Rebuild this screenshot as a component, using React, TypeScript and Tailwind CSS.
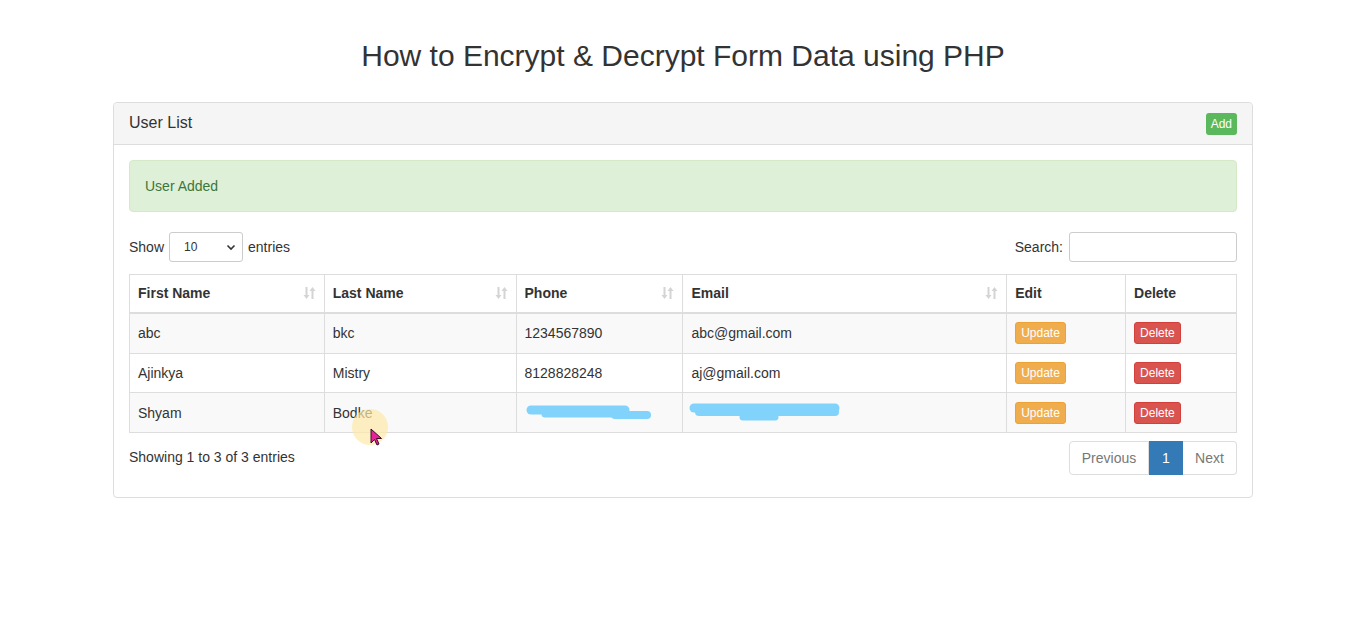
import React from "react";

const SortIcon = () => (
  <svg width="13" height="14" viewBox="0 0 13 14" className="shrink-0">
    <g fill="#d4d4d4">
      <rect x="2.5" y="1" width="2" height="9" />
      <polygon points="0.5,9 6.5,9 3.5,13" />
      <rect x="8.5" y="4" width="2" height="9" />
      <polygon points="6.5,5 12.5,5 9.5,1" />
    </g>
  </svg>
);

const Th = ({ label, sort, w }: { label: string; sort?: boolean; w: string }) => (
  <th className={`${w} h-[38px] border-r border-[#ddd] last:border-r-0 border-b-2 border-b-[#ddd] px-[8px] pt-[8px] pb-[8px] text-left font-bold leading-[20px]`}>
    <div className="flex items-center justify-between">
      <span>{label}</span>
      {sort && <SortIcon />}
    </div>
  </th>
);

const rows = [
  { f: "abc", l: "bkc", p: "1234567890", e: "abc@gmail.com" },
  { f: "Ajinkya", l: "Mistry", p: "8128828248", e: "aj@gmail.com" },
  { f: "Shyam", l: "Bodke", p: "", e: "" },
];

const PhoneScribble = () => (
  <svg width="130" height="20" viewBox="0 0 130 20" className="block">
    <g stroke="#82d3fc" strokeLinecap="round" fill="none">
      <path d="M6 7 L100 7" strokeWidth="9" />
      <path d="M20 11 L98 11" strokeWidth="7" />
      <path d="M90 12 L122 12" strokeWidth="8" />
    </g>
  </svg>
);

const EmailScribble = () => (
  <svg width="160" height="24" viewBox="0 0 160 24" className="block">
    <g stroke="#82d3fc" strokeLinecap="round" fill="none">
      <path d="M7 7 L148 7" strokeWidth="9" />
      <path d="M12 11 L148 11" strokeWidth="8" />
      <path d="M56 16 L88 16" strokeWidth="7" />
    </g>
  </svg>
);

const rowHeights = ["h-[41px]", "h-[39px]", "h-[40px]"];

export default function App() {
  return (
    <div
      className="relative min-h-[628px] bg-white text-[14px] text-[#333]"
      style={{ fontFamily: '"Liberation Sans", Arial, Helvetica, sans-serif' }}
    >
      <div className="mx-auto w-[1170px] pl-[16px] pr-[14px]">
        <h1 className="pt-[39px] pb-[30px] text-center text-[30px] font-normal leading-[33px] text-[#333]">
          How to Encrypt &amp; Decrypt Form Data using PHP
        </h1>

        <div className="rounded-[4px] border border-[#ddd] bg-white">
          <div className="flex items-start justify-between rounded-t-[4px] border-b border-[#ddd] bg-[#f5f5f5] px-[15px] pt-[10px] pb-[9px]">
            <div className="pt-[1px] text-[16px] leading-[18px]">User List</div>
            <button className="h-[22px] rounded-[3px] bg-[#5cb85c] px-[5px] text-[12px] leading-[18px] text-white">
              Add
            </button>
          </div>

          <div className="px-[15px] pt-[15px] pb-[15px]">
            <div className="mb-[20px] flex h-[52px] items-center rounded-[4px] border border-[#d6e9c6] bg-[#dff0d8] px-[15px] text-[#3c763d]">
              User Added
            </div>

            <div className="flex items-center justify-between">
              <div className="flex items-center gap-[5px]">
                <span>Show</span>
                <div className="flex h-[30px] w-[74px] items-center justify-between rounded-[3px] border border-[#ccc] bg-white pl-[14px] pr-[6px] text-[12px]">
                  <span>10</span>
                  <svg width="10" height="10" viewBox="0 0 10 10">
                    <path d="M1.5 3.5 L5 7 L8.5 3.5" stroke="#333" strokeWidth="1.6" fill="none" />
                  </svg>
                </div>
                <span>entries</span>
              </div>
              <div className="flex items-center gap-[6px]">
                <span>Search:</span>
                <div className="h-[30px] w-[168px] rounded-[3px] border border-[#ccc] bg-white" />
              </div>
            </div>

            <table className="mt-[12px] w-full border-collapse border border-[#ddd]">
              <thead>
                <tr>
                  <Th label="First Name" sort w="w-[195px]" />
                  <Th label="Last Name" sort w="w-[192px]" />
                  <Th label="Phone" sort w="w-[167px]" />
                  <Th label="Email" sort w="w-[324px]" />
                  <Th label="Edit" w="w-[119px]" />
                  <Th label="Delete" w="w-[111px]" />
                </tr>
              </thead>
              <tbody>
                {rows.map((r, i) => (
                  <tr key={i} className={i % 2 === 0 ? "bg-[#f9f9f9]" : "bg-white"}>
                    <td className={`${rowHeights[i]} border border-[#ddd] px-[8px] leading-[20px]`}>{r.f}</td>
                    <td className="border border-[#ddd] px-[8px] leading-[20px]">{r.l}</td>
                    <td className="border border-[#ddd] px-[8px] leading-[20px]">
                      {r.p ? r.p : <PhoneScribble />}
                    </td>
                    <td className="border border-[#ddd] px-[4px] leading-[20px]">
                      {r.e ? <span className="pl-[4px]">{r.e}</span> : <EmailScribble />}
                    </td>
                    <td className="border border-[#ddd] px-[8px]">
                      <button className="h-[22px] rounded-[3px] border border-[#eea236] bg-[#f0ad4e] px-[5px] text-[12px] leading-[18px] text-white">
                        Update
                      </button>
                    </td>
                    <td className="border border-[#ddd] px-[8px]">
                      <button className="h-[22px] rounded-[3px] border border-[#d43f3a] bg-[#d9534f] px-[5px] text-[12px] leading-[18px] text-white">
                        Delete
                      </button>
                    </td>
                  </tr>
                ))}
              </tbody>
            </table>

            <div className="mt-[8px] flex items-start justify-between pb-[7px]">
              <div className="pt-[6px] leading-[20px]">Showing 1 to 3 of 3 entries</div>
              <div className="flex h-[34px] text-[14px]">
                <span className="flex w-[80px] items-center justify-center rounded-l-[4px] border border-[#ddd] bg-white text-[#777]">
                  Previous
                </span>
                <span className="flex w-[34px] items-center justify-center border border-[#337ab7] bg-[#337ab7] text-white">
                  1
                </span>
                <span className="flex w-[54px] items-center justify-center rounded-r-[4px] border border-l-0 border-[#ddd] bg-white text-[#777]">
                  Next
                </span>
              </div>
            </div>
          </div>
        </div>
      </div>

      {/* cursor highlight overlay */}
      <div className="pointer-events-none absolute left-[352px] top-[409px] h-[36px] w-[36px] rounded-full bg-[#fde9a8] opacity-70" />
      <svg className="pointer-events-none absolute left-[370px] top-[428px]" width="14" height="20" viewBox="0 0 14 20">
        <path d="M1 1 L1 15 L4.5 11.5 L7 17 L9 16 L6.5 10.5 L11.5 10.5 Z" fill="#e8219a" stroke="#3a0a25" strokeWidth="1" />
      </svg>
    </div>
  );
}
